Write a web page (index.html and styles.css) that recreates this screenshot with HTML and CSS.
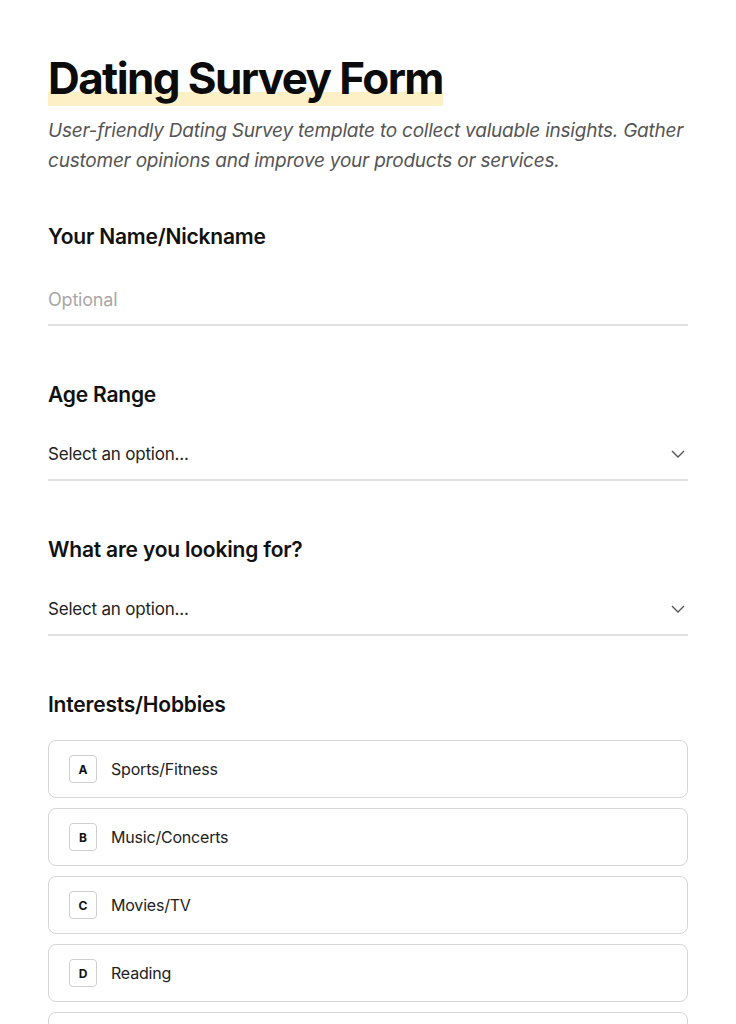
FILE: index.html
```html
<!DOCTYPE html>
<html lang="en">
<head>
<meta charset="utf-8">
<title>Dating Survey Form</title>
<link rel="stylesheet" href="styles.css">
</head>
<body>
<main class="form">
  <header class="head">
    <h1 class="title"><span class="title-mark">Dating Survey Form</span></h1>
    <p class="subtitle">User-friendly Dating Survey template to collect valuable insights. Gather customer opinions and improve your products or services.</p>
  </header>

  <section class="field">
    <h2 class="label">Your Name/Nickname</h2>
    <div class="line-input placeholder">Optional</div>
  </section>

  <section class="field">
    <h2 class="label label-select">Age Range</h2>
    <div class="line-input select">
      <span>Select an option...</span>
      <svg class="chev" width="14" height="8" viewBox="0 0 14 8"><path d="M1 1l6 6 6-6" fill="none" stroke="#555" stroke-width="1.4"/></svg>
    </div>
  </section>

  <section class="field">
    <h2 class="label label-select">What are you looking for?</h2>
    <div class="line-input select">
      <span>Select an option...</span>
      <svg class="chev" width="14" height="8" viewBox="0 0 14 8"><path d="M1 1l6 6 6-6" fill="none" stroke="#555" stroke-width="1.4"/></svg>
    </div>
  </section>

  <section class="field">
    <h2 class="label label-options">Interests/Hobbies</h2>
    <div class="options">
      <div class="option"><span class="key">A</span><span class="opt-text">Sports/Fitness</span></div>
      <div class="option"><span class="key">B</span><span class="opt-text">Music/Concerts</span></div>
      <div class="option"><span class="key">C</span><span class="opt-text">Movies/TV</span></div>
      <div class="option"><span class="key">D</span><span class="opt-text">Reading</span></div>
      <div class="option"><span class="key">E</span><span class="opt-text">Travel</span></div>
    </div>
  </section>
</main>
</body>
</html>
```

FILE: styles.css
```css
* { box-sizing: border-box; }
html, body { margin: 0; padding: 0; background: #fff; }
body {
  font-family: "Inter", "Noto Sans", "Liberation Sans", sans-serif;
  color: #111;
}
.form {
  width: 736px;
  padding: 50px 48px 0;
}
.head { margin-bottom: 46px; }
.title {
  margin: 0;
  font-size: 44px;
  font-weight: 700;
  letter-spacing: -1.6px;
  line-height: 56px;
  color: #0b0b0b;
}
.title-mark {
  background: linear-gradient(to bottom, transparent 74%, #fdf0c6 74%, #fdf0c6 100%);
  padding-bottom: 1px;
}
.subtitle {
  margin: 10px 0 0;
  font-style: italic;
  font-size: 19px;
  line-height: 30px;
  color: #555;
  letter-spacing: -0.22px;
}
.field { margin-bottom: 54px; }
.label {
  margin: 0 0 22px;
  font-size: 21px;
  font-weight: 600;
  line-height: 30px;
  letter-spacing: -0.2px;
  color: #111;
}
.label-select { margin-bottom: 19px; }
.label-options { margin-bottom: 20px; }
.line-input {
  height: 52px;
  display: flex;
  align-items: center;
  border-bottom: 2px solid #e0e0e0;
  font-size: 18px;
  color: #222;
  letter-spacing: -0.2px;
}
.placeholder { color: #a8a8a8; }
.select { justify-content: space-between; font-size: 17px; letter-spacing: -0.2px; }
.chev { margin-right: 3px; }
.options { display: flex; flex-direction: column; gap: 10px; }
.option {
  height: 58px;
  border: 1px solid #d6d6d6;
  border-radius: 8px;
  display: flex;
  align-items: center;
  padding-left: 20px;
  gap: 14px;
}
.key {
  width: 28px;
  height: 28px;
  border: 1px solid #cfcfcf;
  border-radius: 4px;
  display: flex;
  align-items: center;
  justify-content: center;
  font-size: 12px;
  font-weight: 700;
  color: #111;
}
.opt-text { font-size: 16px; color: #222; letter-spacing: -0.2px; }
```
